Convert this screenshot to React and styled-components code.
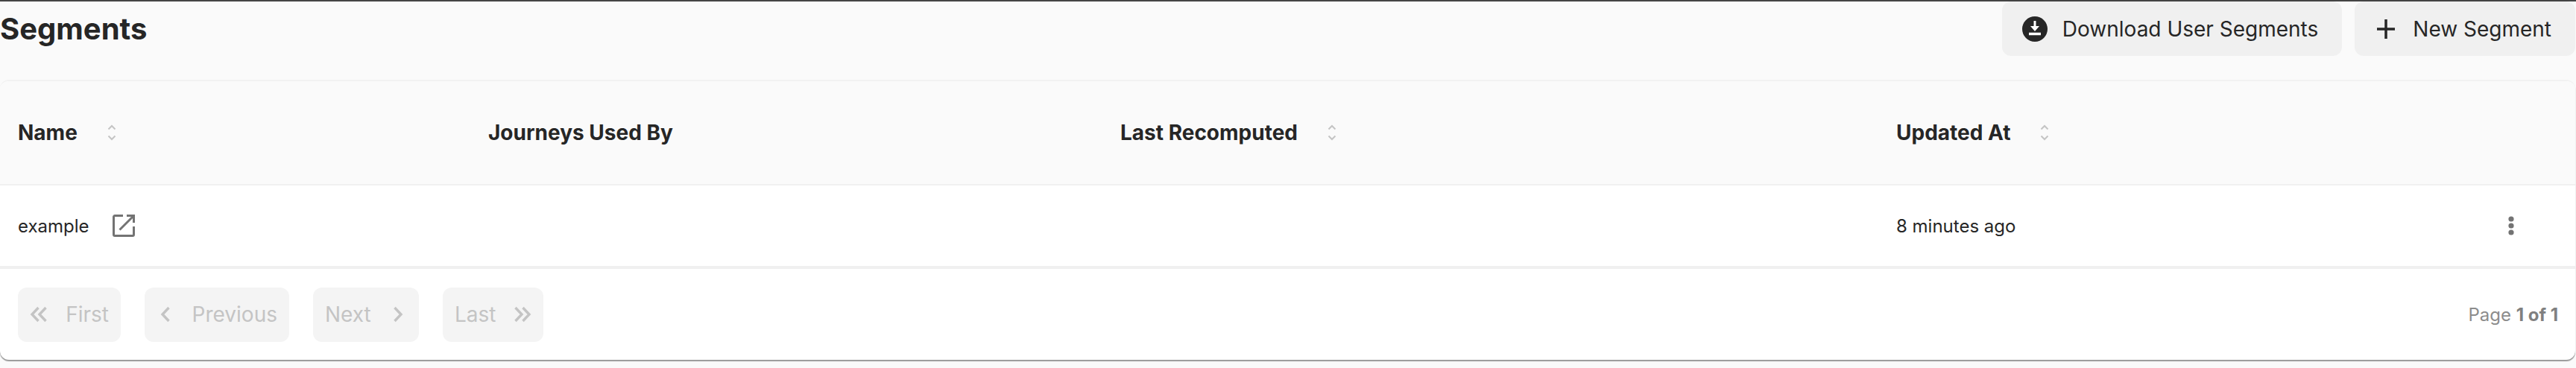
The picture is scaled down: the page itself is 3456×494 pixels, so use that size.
import React from "react";
import styled, { createGlobalStyle } from "styled-components";

const GlobalStyle = createGlobalStyle`
  html, body {
    margin: 0;
    padding: 0;
    background: #fafafa;
  }
  body {
    font-family: Inter, "Liberation Sans", sans-serif;
    color: #262626;
  }
`;

const Page = styled.div`
  width: 3456px;
  height: 494px;
  overflow: hidden;
  border-top: 2px solid #444444;
  box-sizing: border-box;
  background: #fafafa;
`;

const TopBar = styled.header`
  display: flex;
  align-items: flex-start;
  justify-content: space-between;
  height: 105px;
  padding-right: 1px;
  box-sizing: border-box;
`;

const Title = styled.h1`
  margin: 0;
  font-size: 40px;
  line-height: 73px;
  font-weight: 700;
  color: #262626;
`;

const Actions = styled.div`
  display: flex;
  gap: 17px;
`;

const ActionButton = styled.button`
  display: flex;
  align-items: center;
  gap: ${(p) => p.$gap}px;
  height: 73px;
  padding: 0 32px 0 ${(p) => p.$padLeft}px;
  border: 0;
  border-radius: 12px;
  background: #f0f0f0;
  color: #262626;
  font: 400 28px Inter, sans-serif;
`;

const Card = styled.section`
  margin-right: 1px;
  border-top: 2px solid #f2f2f2;
  border-radius: 12px;
  background: #ffffff;
  box-shadow: 0 2px 1px #9a9a9a;
  overflow: hidden;
  height: 376px;
  box-sizing: border-box;
`;

const Table = styled.table`
  width: 100%;
  table-layout: fixed;
  border-collapse: separate;
  border-spacing: 0;
`;

const HeadCell = styled.th`
  height: 138px;
  padding: 0 0 0 24px;
  box-sizing: content-box;
  background: #fafafa;
  border-bottom: 2px solid #f0f0f0;
  text-align: left;
  font-size: 28px;
  font-weight: 700;
  color: #262626;
`;

const HeadLabel = styled.span`
  display: inline-flex;
  align-items: center;
  gap: 40px;
`;

const BodyCell = styled.td`
  height: 108px;
  padding: 0 0 0 24px;
  box-sizing: content-box;
  border-bottom: 4px solid #f0f0f0;
  font-size: 24px;
  color: #262626;
`;

const NameWrap = styled.span`
  display: inline-flex;
  align-items: center;
  gap: 31px;
`;

const UpdatedWrap = styled.div`
  display: flex;
  align-items: center;
  justify-content: space-between;
  padding-right: 82px;
`;

const Footer = styled.div`
  display: flex;
  align-items: center;
  justify-content: space-between;
  height: 122px;
  padding: 0 23px 0 24px;
`;

const Pager = styled.div`
  display: flex;
  gap: 32px;
`;

const PageButton = styled.button`
  display: flex;
  align-items: center;
  justify-content: space-between;
  width: ${(p) => p.$width}px;
  height: 73px;
  padding: 0 16px;
  box-sizing: border-box;
  border: 0;
  border-radius: 12px;
  background: #f4f4f4;
  color: #c4c4c4;
  font: 400 28px Inter, sans-serif;
`;

const PageInfo = styled.div`
  font-size: 24px;
  color: #8c8c8c;

  b {
    font-weight: 700;
    color: #808080;
  }
`;

const SortIcon = () => (
  <svg width="12" height="22" viewBox="0 0 12 22" fill="none" stroke="#c4c4c4" strokeWidth="2">
    <path d="M1.5 6.5L6 2l4.5 4.5M1.5 15.5L6 20l4.5-4.5" />
  </svg>
);

const DownloadIcon = () => (
  <svg width="34" height="34" viewBox="0 0 34 34">
    <circle cx="17" cy="17" r="17" fill="#262626" />
    <path d="M17 6v12" fill="none" stroke="#fff" strokeWidth="3" />
    <path d="M11 13h12l-6 7z" fill="#fff" />
    <path d="M9 23.5h16" stroke="#fff" strokeWidth="3.5" />
  </svg>
);

const PlusIcon = () => (
  <svg width="24" height="26" viewBox="0 0 24 26" stroke="#262626" strokeWidth="3.5">
    <path d="M12 0v26M0 13h24" />
  </svg>
);

const LinkIcon = () => (
  <svg width="30" height="30" viewBox="0 0 30 30" fill="none" stroke="#737373" strokeWidth="3">
    <path d="M14 1.5H3A1.5 1.5 0 0 0 1.5 3v24A1.5 1.5 0 0 0 3 28.5h24a1.5 1.5 0 0 0 1.5-1.5V16" />
    <path d="M19 1.5h9.5V11M28.5 1.5L9.5 20.5" />
  </svg>
);

const DotsIcon = () => (
  <svg width="8" height="26" viewBox="0 0 8 26" fill="#737373">
    <circle cx="4" cy="4" r="3.6" />
    <circle cx="4" cy="13" r="3.6" />
    <circle cx="4" cy="22" r="3.6" />
  </svg>
);

const chevronPaths = {
  first: "M11.5 3L3 12l8.5 9M21.5 3L13 12l8.5 9",
  prev: "M16.5 3L8 12l8.5 9",
  next: "M7.5 3L16 12l-8.5 9",
  last: "M2.5 3L11 12l-8.5 9M12.5 3L21 12l-8.5 9",
};

const Chevrons = ({ kind }) => (
  <svg width="24" height="24" viewBox="0 0 24 24" fill="none" stroke="#c4c4c4" strokeWidth="3.4">
    <path d={chevronPaths[kind]} />
  </svg>
);

const columns = [
  { label: "Name", width: 631, sort: true },
  { label: "Journeys Used By", width: 848 },
  { label: "Last Recomputed", width: 1041, sort: true },
  { label: "Updated At", sort: true },
];

export default function App() {
  return (
    <Page>
      <GlobalStyle />
      <TopBar>
        <Title>Segments</Title>
        <Actions>
          <ActionButton $gap={20} $padLeft={27}>
            <DownloadIcon />
            Download User Segments
          </ActionButton>
          <ActionButton $gap={24} $padLeft={30}>
            <PlusIcon />
            New Segment
          </ActionButton>
        </Actions>
      </TopBar>
      <Card>
        <Table>
          <colgroup>
            {columns.map((c) => (
              <col key={c.label} style={{ width: c.width }} />
            ))}
          </colgroup>
          <thead>
            <tr>
              {columns.map((c) => (
                <HeadCell key={c.label}>
                  <HeadLabel>
                    {c.label}
                    {c.sort && <SortIcon />}
                  </HeadLabel>
                </HeadCell>
              ))}
            </tr>
          </thead>
          <tbody>
            <tr>
              <BodyCell>
                <NameWrap>
                  example
                  <LinkIcon />
                </NameWrap>
              </BodyCell>
              <BodyCell />
              <BodyCell />
              <BodyCell>
                <UpdatedWrap>
                  <span>8 minutes ago</span>
                  <DotsIcon />
                </UpdatedWrap>
              </BodyCell>
            </tr>
          </tbody>
        </Table>
        <Footer>
          <Pager>
            <PageButton $width={138}>
              <Chevrons kind="first" />
              First
            </PageButton>
            <PageButton $width={194}>
              <Chevrons kind="prev" />
              Previous
            </PageButton>
            <PageButton $width={142}>
              Next
              <Chevrons kind="next" />
            </PageButton>
            <PageButton $width={135}>
              Last
              <Chevrons kind="last" />
            </PageButton>
          </Pager>
          <PageInfo>
            Page <b>1 of 1</b>
          </PageInfo>
        </Footer>
      </Card>
    </Page>
  );
}
